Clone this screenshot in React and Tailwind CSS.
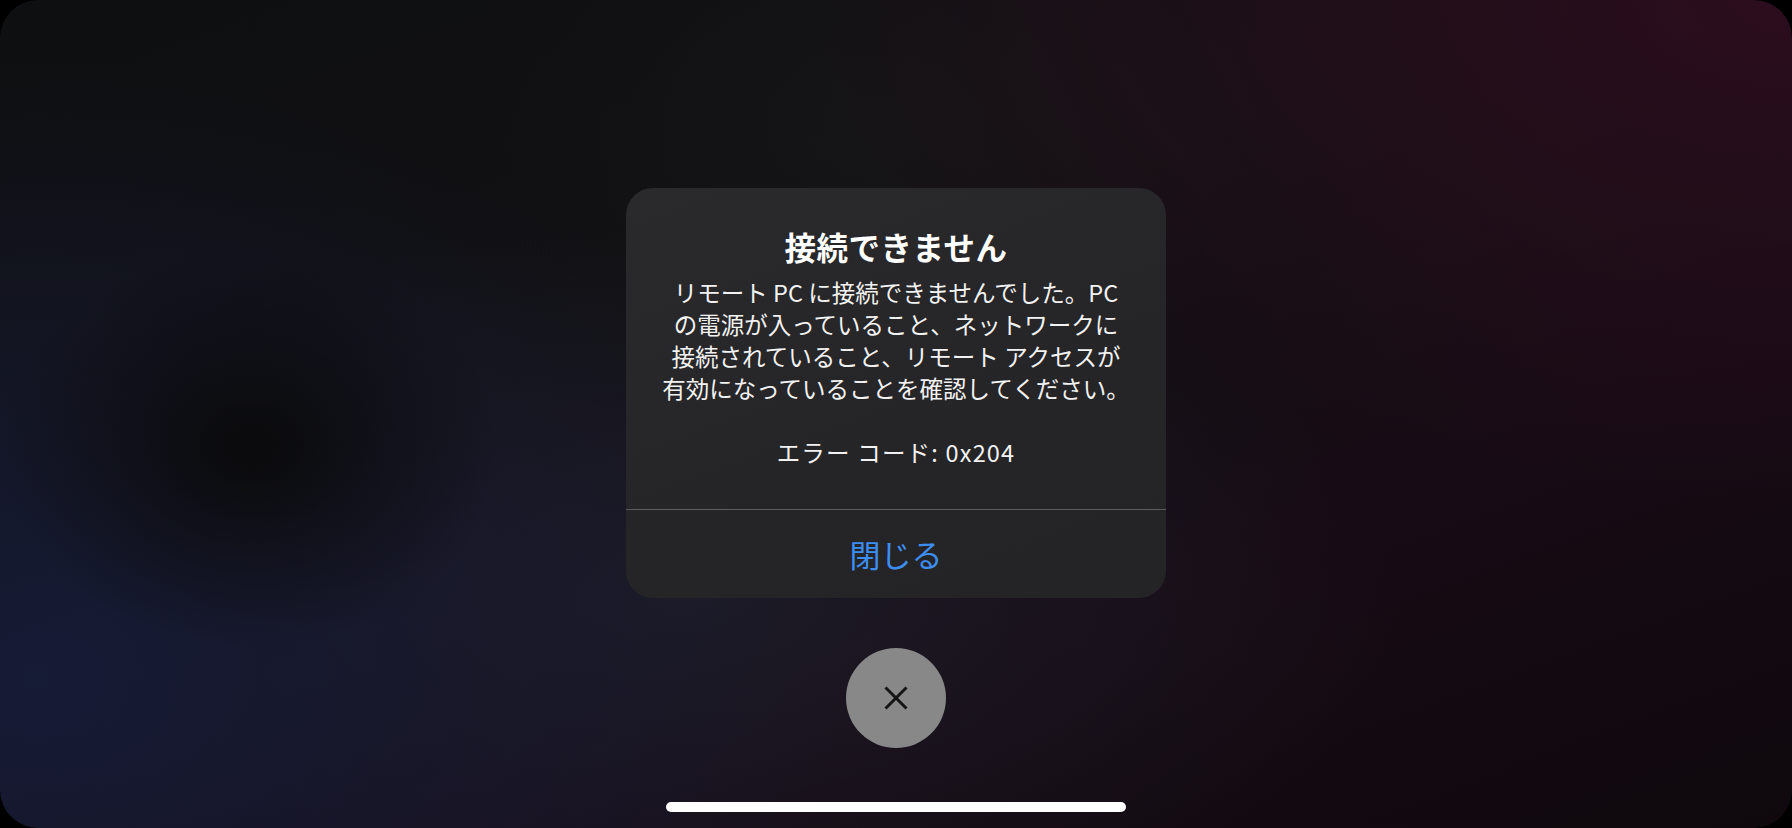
import React from "react";

export default function App() {
  const font = { fontFamily: '"Noto Sans CJK JP", "Noto Sans", sans-serif' };
  return (
    <div className="w-[1792px] h-[828px] bg-black overflow-hidden" style={font}>
      <div className="w-full h-full rounded-[38px] overflow-hidden flex flex-col items-center pt-[188px] bg-[radial-gradient(ellipse_14%_24%_at_14%_54%,#0a0a0b_0%,rgba(10,10,11,0)_100%),radial-gradient(ellipse_55%_60%_at_100%_0%,#2c0d1e_0%,rgba(40,12,28,0)_100%),radial-gradient(ellipse_45%_75%_at_2%_82%,#161b36_0%,rgba(22,27,54,0)_100%),radial-gradient(ellipse_40%_45%_at_38%_72%,#1d1b26_0%,rgba(29,27,38,0)_100%),radial-gradient(ellipse_25%_35%_at_50%_15%,#151416_0%,rgba(21,20,22,0)_100%),linear-gradient(160deg,#0e0f10_0%,#111012_40%,#170b15_68%,#0f090d_100%)]">
        <div className="w-[540px] rounded-[27px] bg-[linear-gradient(160deg,#2a292c_0%,#252427_60%,#242326_100%)] flex flex-col text-center">
          <div className="pt-[38px] pb-[41px] px-[20px] flex flex-col items-center">
            <div className="text-[31.5px] leading-[40px] font-bold text-white tracking-[0.5px]">
              接続できません
            </div>
            <div className="mt-[10px] text-[23.5px] leading-[32px] text-[#f2f2f2] whitespace-nowrap">
              リモート PC に接続できませんでした。PC
              <br />
              の電源が入っていること、ネットワークに
              <br />
              接続されていること、リモート アクセスが
              <br />
              有効になっていることを確認してください。
              <br />
              <br />
              <span className="tracking-[1.2px]">エラー コード: 0x204</span>
            </div>
          </div>
          <div className="h-px bg-[#5c5b5e]" />
          <button className="h-[88px] flex items-center justify-center text-[31px] text-[#3d8ef2]">
            閉じる
          </button>
        </div>
        <div className="mt-[50px] w-[100px] h-[100px] rounded-full bg-[#888888] flex items-center justify-center">
          <svg width="42" height="42" viewBox="0 0 24 24" fill="none" stroke="#151515" strokeWidth="1.7" strokeLinecap="butt">
            <path d="M18 6 6 18" />
            <path d="M6 6l12 12" />
          </svg>
        </div>
        <div className="mt-[54px] w-[460px] h-[10px] rounded-full bg-white" />
      </div>
    </div>
  );
}
